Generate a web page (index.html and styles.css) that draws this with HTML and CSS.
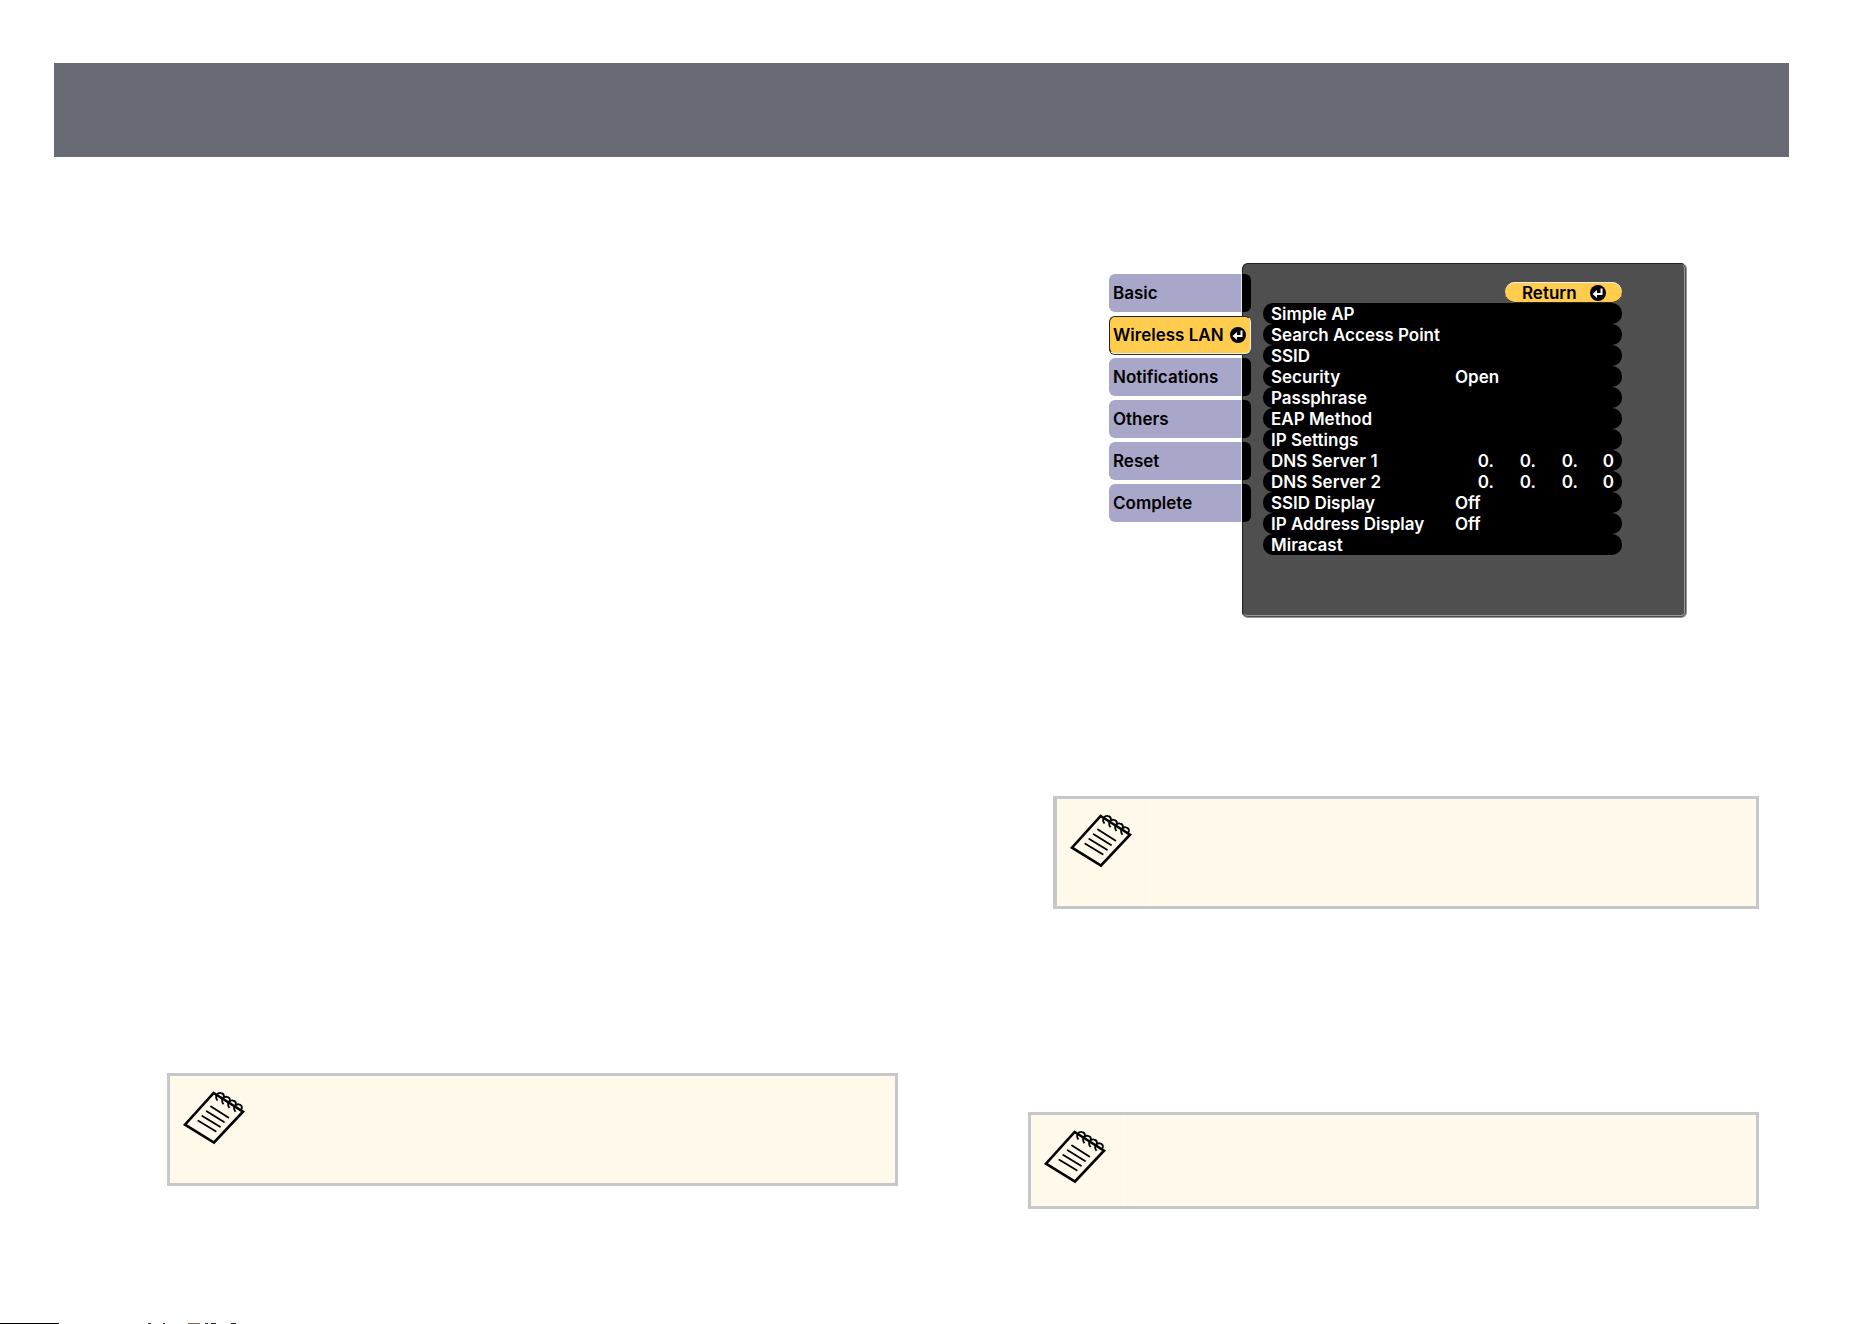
FILE: index.html
```html
<!DOCTYPE html>
<html lang="en">
<head>
    <meta charset="UTF-8">
    <meta name="viewport" content="width=device-width, initial-scale=1.0">
    <title>Wireless LAN</title>
    <link rel="stylesheet" href="styles.css">
</head>
<body>
    <!-- shared icons -->
    <svg class="sprite" aria-hidden="true">
        <symbol id="enter" viewBox="0 0 16 16">
            <circle cx="8" cy="8" r="8" fill="#000"/>
            <path d="M11.5 3.5V9H6" fill="none" stroke="#fff" stroke-width="2"/>
            <path d="M2.5 9L7 5V13Z" fill="#fff"/>
        </symbol>
        <symbol id="notepad" viewBox="0 0 66 58">
            <g fill="none" stroke="#000">
                <path d="M33.7 5L63 23.7L34 54.5L5 36.7Z" stroke-width="2.6"/>
                <path d="M31 18.5L48.3 29.5M26.7 23.3L44 34M22.3 28L40 38.7M18.3 32.7L35.7 43.3" stroke-width="1.8" stroke-linecap="round"/>
                <g stroke-width="1.8">
                    <path d="M37.5 12.5C34 7.5 38 4.5 41 5C44.5 5.5 45 10 41.5 11"/>
                    <path d="M43.5 16.3C40 11.3 44 8.3 47 8.8C50.5 9.3 51 13.8 47.5 14.8"/>
                    <path d="M49.5 20C46 15 50 12 53 12.5C56.5 13 57 17.5 53.5 18.5"/>
                    <path d="M55.5 23.8C52 18.8 56 15.8 59 16.3C62.5 16.8 63 21.3 59.5 22.3"/>
                </g>
            </g>
        </symbol>
    </svg>

    <header class="banner"></header>

    <main class="columns">
        <section class="column column-left">
            <aside class="note">
                <div class="note-icon"><svg><use href="#notepad"/></svg></div>
            </aside>
        </section>

        <section class="column">
            <div class="menu">
                <nav class="tabs">
                    <button class="tab">Basic</button>
                    <button class="tab selected">Wireless LAN <svg class="enter"><use href="#enter"/></svg></button>
                    <button class="tab">Notifications</button>
                    <button class="tab">Others</button>
                    <button class="tab">Reset</button>
                    <button class="tab">Complete</button>
                </nav>
                <div class="panel">
                    <button class="return">Return <svg class="enter"><use href="#enter"/></svg></button>
                    <button class="option"><span class="name">Simple AP</span></button>
                    <button class="option"><span class="name">Search Access Point</span></button>
                    <button class="option"><span class="name">SSID</span></button>
                    <button class="option"><span class="name">Security</span><span>Open</span></button>
                    <button class="option"><span class="name">Passphrase</span></button>
                    <button class="option"><span class="name">EAP Method</span></button>
                    <button class="option"><span class="name">IP Settings</span></button>
                    <button class="option"><span class="name">DNS Server 1</span><span class="address"><span>0.</span><span>0.</span><span>0.</span><span>0</span></span></button>
                    <button class="option"><span class="name">DNS Server 2</span><span class="address"><span>0.</span><span>0.</span><span>0.</span><span>0</span></span></button>
                    <button class="option"><span class="name">SSID Display</span><span>Off</span></button>
                    <button class="option"><span class="name">IP Address Display</span><span>Off</span></button>
                    <button class="option"><span class="name">Miracast</span></button>
                </div>
            </div>

            <aside class="note note-indented">
                <div class="note-icon split"><svg><use href="#notepad"/></svg></div>
            </aside>

            <aside class="note note-short">
                <div class="note-icon split"><svg><use href="#notepad"/></svg></div>
            </aside>
        </section>
    </main>

    <footer class="edge"></footer>
</body>
</html>
```

FILE: styles.css
```css
* {
    box-sizing: border-box;
}
body {
    margin: 0;
    min-height: 100vh;
    display: flex;
    flex-direction: column;
    background: #fff;
    font-family: Inter, Roboto, sans-serif;
}
button {
    font: inherit;
    border: none;
    margin: 0;
    cursor: pointer;
    text-align: left;
    white-space: nowrap;
}
.sprite {
    display: none;
}
.banner {
    height: 94px;
    margin: 63px 83px 0 54px;
    background: #696b74;
}
.columns {
    flex: 1;
    display: grid;
    grid-template-columns: 1fr 1fr;
    align-items: stretch;
    align-content: start;
    gap: 130px;
    padding: 106px 113px 0 167px;
}
.column {
    display: flex;
    flex-direction: column;
}
.column-left {
    justify-content: flex-end;
    padding-bottom: 23px;
}

/* projector menu */
.menu {
    display: flex;
    max-width: 659px;
    margin-bottom: 178px;
    padding-left: 81px;
    font-size: 17px;
    font-weight: 600;
    line-height: 21px;
}
.tabs {
    display: flex;
    flex-direction: column;
    gap: 4px;
    width: 142px;
    padding-top: 11px;
    margin-right: -9px;
    z-index: 1;
}
.tab {
    display: flex;
    align-items: center;
    justify-content: space-between;
    height: 38px;
    padding: 0 5px 0 4px;
    border-radius: 6px;
    color: #000;
    background: linear-gradient(to right, #a9a7c9 132px, #e4e4ee 132px, #e4e4ee 133px, #000 133px);
}
.tab.selected {
    background: #ffcc4d;
    border: 1px solid #222;
    border-right-color: #eee;
    border-bottom-color: #eee;
    box-shadow: 0 1px 0 #333;
    padding: 0 4px 0 3px;
}
.enter {
    width: 16px;
    height: 16px;
}
.panel {
    flex: 1;
    display: flex;
    flex-direction: column;
    padding: 18px 62px 60px 20px;
    border: 1px solid #222;
    border-right: 3px double #999;
    border-bottom: 3px double #999;
    border-radius: 6px;
    background: #4f4f4f;
}
.return {
    align-self: flex-end;
    display: flex;
    align-items: center;
    justify-content: space-between;
    width: 117px;
    height: 21px;
    padding: 1px 16px 0 17px;
    border-radius: 10px;
    color: #000;
    background: #ffcc4d;
    box-shadow: inset 0 1px 0 #eee, inset 0 -1px 0 #222;
}
.option {
    display: flex;
    height: 21px;
    padding: 1px 8px 0 8px;
    border-radius: 10px;
    background: #000;
    color: #fff;
}
.name {
    width: 184px;
}
.address {
    display: grid;
    grid-template-columns: 39px 42px 42px 36px;
    text-align: right;
}

/* note boxes */
.note {
    display: flex;
    height: 113px;
    border: 3px solid #c6c7c9;
    background: #fff9eb;
}
.note-indented {
    margin-left: 25px;
    margin-bottom: 203px;
    border-left-width: 4px;
}
.note-short {
    height: 97px;
}
.note-icon {
    width: 94px;
    padding: 12px 0 0 10px;
}
.note-icon.split {
    border-right: 1px solid #fffcf5;
}
.note-icon svg {
    width: 66px;
    height: 58px;
}

/* dark strip along the bottom edge */
.edge {
    height: 1px;
    background: linear-gradient(to right,
        #000 59px, #fff 59px, #fff 148px,
        #433 148px, #433 151px, #fff 151px, #fff 163px,
        #433 163px, #433 165px, #fff 165px, #fff 188px,
        #765 188px, #765 200px, #fff 200px, #fff 205px,
        #333 205px, #333 208px, #fff 208px, #fff 211px,
        #222 211px, #222 216px, #fff 216px, #fff 231px,
        #222 231px, #222 236px, #fff 236px);
}
```
